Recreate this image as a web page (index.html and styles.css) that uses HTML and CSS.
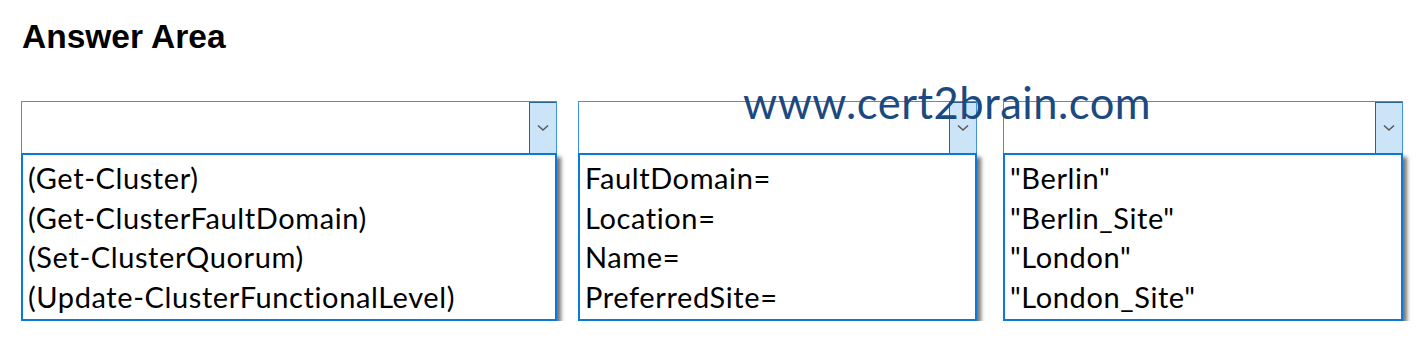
FILE: index.html
```html
<!DOCTYPE html>
<html lang="en">
<head>
    <meta charset="UTF-8">
    <title>Answer Area</title>
    <link rel="stylesheet" href="styles.css">
</head>
<body>
    <div class="page">
        <h1 class="title">Answer Area</h1>
        <div class="row">
            <div class="dropdown dd-first">
                <div class="dd-head">
                    <span class="dd-value"></span>
                    <span class="dd-btn"><svg width="12" height="8" viewBox="0 0 12 8"><path d="M1 1.5 L6 6 L11 1.5" fill="none" stroke="#5a5a5a" stroke-width="1.6"/></svg></span>
                </div>
                <ul class="dd-list">
                    <li>(Get-Cluster)</li>
                    <li>(Get-ClusterFaultDomain)</li>
                    <li>(Set-ClusterQuorum)</li>
                    <li>(Update-ClusterFunctionalLevel)</li>
                </ul>
            </div>
            <div class="dropdown dd-second">
                <div class="dd-head">
                    <span class="dd-value"></span>
                    <span class="dd-btn"><svg width="12" height="8" viewBox="0 0 12 8"><path d="M1 1.5 L6 6 L11 1.5" fill="none" stroke="#5a5a5a" stroke-width="1.6"/></svg></span>
                </div>
                <ul class="dd-list">
                    <li>FaultDomain=</li>
                    <li>Location=</li>
                    <li>Name=</li>
                    <li>PreferredSite=</li>
                </ul>
            </div>
            <div class="dropdown dd-third">
                <div class="dd-head">
                    <span class="dd-value"></span>
                    <span class="dd-btn"><svg width="12" height="8" viewBox="0 0 12 8"><path d="M1 1.5 L6 6 L11 1.5" fill="none" stroke="#5a5a5a" stroke-width="1.6"/></svg></span>
                </div>
                <ul class="dd-list">
                    <li>"Berlin"</li>
                    <li>"Berlin_Site"</li>
                    <li>"London"</li>
                    <li>"London_Site"</li>
                </ul>
            </div>
        </div>
        <div class="watermark">www.cert2brain.com</div>
    </div>
</body>
</html>
```

FILE: styles.css
```css
body {
    margin: 0;
    padding: 0;
    background: #ffffff;
    font-family: 'Lato', 'Liberation Sans', sans-serif;
    color: #000000;
}
.page {
    position: relative;
    padding: 18px 0 0 21px;
}
.title {
    margin: 0;
    font-family: 'Liberation Sans', Arial, sans-serif;
    font-weight: bold;
    font-size: 33.5px;
    line-height: 38px;
    padding-left: 1px;
}
.row {
    display: flex;
    margin-top: 45px;
}
.dropdown {
    display: flex;
    flex-direction: column;
}
.dd-first { width: 536px; }
.dd-second { width: 399px; margin-left: 21px; }
.dd-third { width: 400px; margin-left: 26px; }
.dd-head {
    height: 51px;
    border: 1px solid #3f93e0;
    border-bottom: none;
    display: flex;
    justify-content: flex-end;
}
.dd-btn {
    width: 26px;
    background: #cce4f7;
    border: 1px solid #2c6290;
    border-right: none;
    border-bottom: none;
    display: flex;
    align-items: center;
    justify-content: center;
}
.dd-list {
    list-style: none;
    margin: 0;
    padding: 3px 0 3px 5px;
    border: 2px solid #0a7ad8;
    box-shadow: 4px 4px 4px rgba(0, 0, 0, 0.55);
    font-size: 29px;
    letter-spacing: 0.6px;
}
.dd-list li {
    height: 39.5px;
    line-height: 39.5px;
    white-space: nowrap;
}
.watermark {
    position: absolute;
    left: 743px;
    top: 76px;
    font-family: 'Lato', 'Liberation Sans', sans-serif;
    font-size: 43.5px;
    color: #1c4a80;
    letter-spacing: 0.5px;
}
```
